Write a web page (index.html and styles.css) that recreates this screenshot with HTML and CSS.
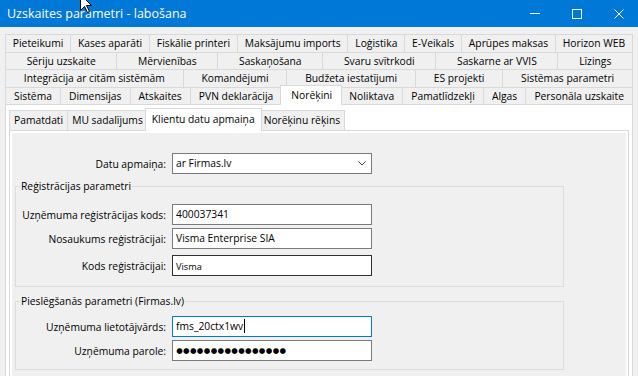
FILE: index.html
```html
<!DOCTYPE html>
<html lang="lv">
<head>
    <meta charset="UTF-8">
    <meta name="viewport" content="width=device-width, initial-scale=1.0">
    <title>Uzskaites parametri - labošana</title>
    <link rel="stylesheet" href="styles.css">
</head>
<body>
<div class="window">
    <div class="titlebar">
        <span class="title">Uzskaites parametri - labošana</span>
        <div class="controls">
            <span class="ctl"><svg width="10" height="10" viewBox="0 0 10 10"><path d="M0 4.5H10" stroke="#fff" fill="none"/></svg></span>
            <span class="ctl"><svg width="10" height="10" viewBox="0 0 10 10"><rect x="0.5" y="0.5" width="9" height="9" stroke="#fff" fill="none"/></svg></span>
            <span class="ctl"><svg width="10" height="10" viewBox="0 0 10 10"><path d="M0.5 0.5L9.5 9.5M9.5 0.5L0.5 9.5" stroke="#fff" fill="none"/></svg></span>
        </div>
    </div>

    <div class="body">
        <div class="tabs">
            <div class="tab-row">
                <div class="tab">Pieteikumi</div>
                <div class="tab">Kases aparāti</div>
                <div class="tab">Fiskālie printeri</div>
                <div class="tab">Maksājumu imports</div>
                <div class="tab">Loģistika</div>
                <div class="tab">E-Veikals</div>
                <div class="tab">Aprūpes maksas</div>
                <div class="tab">Horizon WEB</div>
            </div>
            <div class="tab-row">
                <div class="tab">Sēriju uzskaite</div>
                <div class="tab">Mērvienības</div>
                <div class="tab">Saskaņošana</div>
                <div class="tab">Svaru svītrkodi</div>
                <div class="tab">Saskarne ar VVIS</div>
                <div class="tab">Līzings</div>
            </div>
            <div class="tab-row">
                <div class="tab">Integrācija ar citām sistēmām</div>
                <div class="tab">Komandējumi</div>
                <div class="tab">Budžeta iestatījumi</div>
                <div class="tab">ES projekti</div>
                <div class="tab">Sistēmas parametri</div>
            </div>
            <div class="tab-row">
                <div class="tab">Sistēma</div>
                <div class="tab">Dimensijas</div>
                <div class="tab">Atskaites</div>
                <div class="tab">PVN deklarācija</div>
                <div class="tab active">Norēķini</div>
                <div class="tab">Noliktava</div>
                <div class="tab">Pamatlīdzekļi</div>
                <div class="tab">Algas</div>
                <div class="tab">Personāla uzskaite</div>
            </div>
        </div>

        <div class="page">
            <div class="subtabs">
                <div class="subtab">Pamatdati</div>
                <div class="subtab">MU sadalījums</div>
                <div class="subtab active">Klientu datu apmaiņa</div>
                <div class="subtab">Norēķinu rēķins</div>
            </div>
            <div class="subpage">
                <div class="content">
                    <div class="field top">
                        <span class="label">Datu apmaiņa:</span>
                        <div class="input select">
                            <span>ar Firmas.lv</span>
                            <svg class="chevron" width="8" height="5" viewBox="0 0 8 5"><path d="M0.5 0.5L4 4L7.5 0.5" stroke="#444" fill="none"/></svg>
                        </div>
                    </div>

                    <fieldset class="group first">
                        <legend>Reģistrācijas parametri</legend>
                        <div class="field">
                            <span class="label">Uzņēmuma reģistrācijas kods:</span>
                            <div class="input">400037341</div>
                        </div>
                        <div class="field near">
                            <span class="label">Nosaukums reģistrācijai:</span>
                            <div class="input">Visma Enterprise SIA</div>
                        </div>
                        <div class="field far">
                            <span class="label">Kods reģistrācijai:</span>
                            <div class="input dark small">Visma</div>
                        </div>
                    </fieldset>

                    <fieldset class="group second">
                        <legend>Pieslēgšanās parametri (Firmas.lv)</legend>
                        <div class="field">
                            <span class="label">Uzņēmuma lietotājvārds:</span>
                            <div class="input focus">fms_20ctx1wv<span class="caret"></span></div>
                        </div>
                        <div class="field near">
                            <span class="label">Uzņēmuma parole:</span>
                            <div class="input password"><span>●</span><span>●</span><span>●</span><span>●</span><span>●</span><span>●</span><span>●</span><span>●</span><span>●</span><span>●</span><span>●</span><span>●</span><span>●</span><span>●</span><span>●</span><span>●</span></div>
                        </div>
                    </fieldset>
                </div>
            </div>
        </div>
    </div>

    <svg class="cursor" width="13" height="20" viewBox="0 0 13 20"><path d="M0.5 0.5V16.5L4.5 12.5L7.5 18.5L9.5 17.5L6.5 11.5H11.5Z" fill="#fff" stroke="#000"/></svg>
</div>
</body>
</html>
```

FILE: styles.css
```css
* { box-sizing: border-box; }

body {
    margin: 0;
    width: 638px;
    height: 376px;
    overflow: hidden;
    background: #f0f0f0;
    font-family: "Open Sans", "Noto Sans", sans-serif;
    font-size: 10.3px;
    color: #000;
}

.window {
    position: relative;
    height: 376px;
    overflow: hidden;
}

/* title bar */
.titlebar {
    height: 27px;
    background: #0078d7;
    color: #fff;
    display: flex;
    align-items: center;
    padding-left: 7px;
}
.title {
    flex: 1;
    font-size: 12.5px;
}
.controls {
    display: flex;
    height: 100%;
    margin-right: -2px;
}
.ctl {
    width: 42px;
    display: flex;
    align-items: center;
    justify-content: center;
}
.ctl svg { display: block; }

.body {
    padding: 7px 5px 0 5px;
}

/* top level tabs */
.tab-row {
    display: flex;
    height: 18px;
}
.tab-row:nth-child(even) { height: 17px; }

.tab {
    flex: 1 1 auto;
    display: flex;
    align-items: center;
    justify-content: center;
    padding: 0 4px 1px;
    white-space: nowrap;
    background: #f0f0f0;
    border: 1px solid #d9d9d9;
    border-bottom: none;
    margin-left: -1px;
}
.tab:first-child { margin-left: 0; }
.tab.active {
    align-self: flex-start;
    height: 20px;
    margin-top: -2px;
    margin-left: -2px;
    margin-right: -1px;
    padding: 0 5px 1px 6px;
    background: #fff;
    position: relative;
    z-index: 1;
}

.page {
    border: 1px solid #d9d9d9;
    background: #fff;
    padding: 5px 3px 0 3px;
    height: 300px;
}

/* inner tabs */
.subtabs {
    display: flex;
    height: 20px;
}
.subtab {
    padding: 0 4px 1px;
    display: flex;
    align-items: center;
    white-space: nowrap;
    background: #f0f0f0;
    border: 1px solid #d9d9d9;
    border-bottom: none;
    margin-left: -1px;
}
.subtab:first-child { margin-left: 0; }
.subtab.active {
    align-self: flex-start;
    height: 23px;
    margin-top: -2px;
    margin-left: -3px;
    margin-right: -2px;
    padding: 0 6px 3px;
    background: #fff;
    position: relative;
    z-index: 1;
}

.subpage {
    border: 1px solid #d9d9d9;
    background: #fff;
    padding: 2px;
    height: 260px;
}
.content {
    background: #f0f0f0;
    height: 100%;
    padding-top: 20px;
}

/* form rows */
.field {
    display: flex;
    align-items: center;
    height: 21px;
}
.field.near { margin-top: 3px; }
.field.far { margin-top: 6px; }

.label {
    width: 150px;
    margin-right: 6px;
    text-align: right;
    white-space: nowrap;
}
.field.top .label { width: 154px; }

.input {
    width: 200px;
    height: 21px;
    border: 1px solid #7a7a7a;
    background: #fff;
    padding: 0 3px 1px;
    display: flex;
    align-items: center;
    white-space: nowrap;
}
.input.select { justify-content: space-between; padding-right: 5px; }
.chevron { display: block; }
.input.dark { border-color: #333; }
.input.small { font-size: 9.2px; padding-top: 2px; }
.input.focus { border-color: #0078d7; }
.input.password {
    font-family: "DejaVu Sans", sans-serif;
    font-size: 7.5px;
    padding-left: 3px;
}
.input.password span {
    width: 6.9px;
    text-align: center;
    overflow: hidden;
}
.caret {
    display: inline-block;
    width: 1px;
    height: 14px;
    background: #000;
    margin-left: 1px;
}

/* group boxes */
.group {
    width: 549px;
    margin: 6px 0 0 3px;
    border: 1px solid #dcdcdc;
    padding: 11px 0 10px 0;
    min-width: 0;
}
.group.second {
    margin-top: 8px;
    padding: 8px 0 8px 0;
}
.group legend {
    line-height: 13px;
    padding: 0 1px;
    margin-left: 4px;
}

.cursor {
    position: absolute;
    left: 80px;
    top: -6px;
}
```
